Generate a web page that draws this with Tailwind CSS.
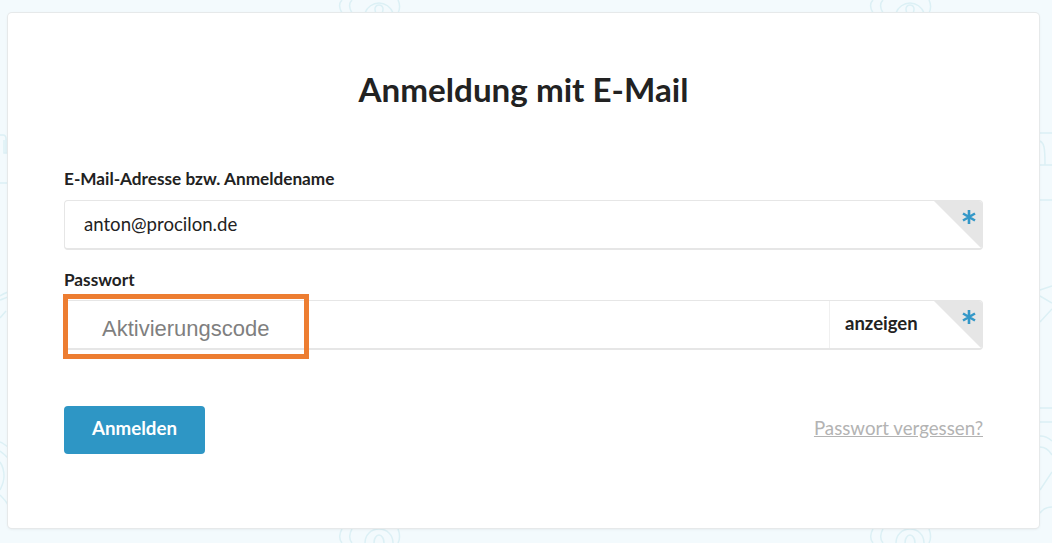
<!DOCTYPE html>
<html>
  <head>
    <meta charset="UTF-8" />
    <title>Anmeldung mit E-Mail</title>
    <script src="https://cdn.jsdelivr.net/npm/@tailwindcss/browser@4"></script>
  </head>
  <body class="bg-[#f3fafd] font-['Lato',sans-serif] text-[#222]">
    <div class="relative h-[543px] w-[1052px] overflow-hidden pl-[8px] pt-[13px]">
      <!-- Hintergrundmuster -->
      <svg class="absolute inset-0" width="1052" height="543" fill="none" stroke="#dcf0f5" stroke-width="1.5">
        <path d="M342 13c-3-5-3-10 0-13M352 13c-3-5-3-10 0-13M365 13c2-6 8-10 14-10s12 4 14 10M376 13c-2-4-1-8 3-8s5 4 3 8M398 13c2-4 2-9 0-13" />
        <path d="M873 13c-3-5-3-10 0-13M883 13c-3-5-3-10 0-13M896 13c2-6 8-10 14-10s12 4 14 10M907 13c-2-4-1-8 3-8s5 4 3 8M929 13c2-4 2-9 0-13" />
        <path d="M342 529c-3 5-3 10 0 14M352 529c-3 5-3 10 0 14M365 543c0-8 6-14 14-14s14 6 14 14M374 543c0-4 2-8 5-8s5 4 5 8M398 529c2 5 2 10 0 14" />
        <path d="M873 529c-3 5-3 10 0 14M883 529c-3 5-3 10 0 14M896 543c0-8 6-14 14-14s14 6 14 14M905 543c0-4 2-8 5-8s5 4 5 8M929 529c2 5 2 10 0 14" />
        <path d="M0 135h3c2 0 3 2 3 4v14h2M4 140v13h3M0 183h8M0 296c3-2 5-3 8-4M0 300c3-1 5-2 8-3M0 318l6-7M0 442c3 1 5 3 8 5M0 451c3 2 5 4 8 7M0 462c2 3 4 8 4 14s-2 10-4 14M0 495c3 3 6 6 8 10" />
        <path d="M1040 133h12M1040 141c4 2 5 6 5 24M1040 165h12M1040 200h12M1040 290l12-4M1040 296l12 7M1040 322l12-13M1040 408h12M1040 422h12M1040 436c4 0 9 2 12 5M1040 447c5 0 9 3 12 8M1040 490l12-18M1040 513c3-4 7-6 12-6" />
      </svg>

      <main class="relative h-[515px] w-[1031px] rounded-[4px] bg-white px-[56px] pt-[57px] shadow-[0_0_0_1px_#e6e9ea,0_1px_3px_rgba(0,0,0,0.1)]">
        <h1 class="text-center text-[33.2px] leading-[38px] font-bold">Anmeldung mit E-Mail</h1>

        <form class="mt-[61px]">
          <label class="block text-[17.2px] leading-[20px] font-bold">E-Mail-Adresse bzw. Anmeldename</label>
          <div class="relative mt-[11px] flex h-[50px] items-center overflow-hidden rounded-[4px] border border-b-2 border-[#e6e6e6] bg-white pl-[19px] text-[18.6px]">
            <span>anton@procilon.de</span>
            <span class="absolute top-[-1px] right-[-1px] h-[50px] w-[50px] bg-[#e6e6e6] [clip-path:polygon(0_0,100%_0,100%_100%)]"></span>
            <svg class="absolute top-[9px] right-[6px]" width="14" height="14" viewBox="0 0 14 14" fill="none" stroke="#3498c8" stroke-width="2.6">
              <path d="M7 0v14M1 3.5l12 7M13 3.5l-12 7" />
            </svg>
          </div>

          <label class="mt-[20px] block text-[17.2px] leading-[20px] font-bold">Passwort</label>
          <div class="relative mt-[10px] flex h-[50px] items-center overflow-hidden rounded-[4px] border border-b-2 border-[#e6e6e6] bg-white">
            <span class="absolute top-[-1px] right-[-1px] h-[50px] w-[50px] bg-[#e6e6e6] [clip-path:polygon(0_0,100%_0,100%_100%)]"></span>
            <svg class="absolute top-[9px] right-[6px]" width="14" height="14" viewBox="0 0 14 14" fill="none" stroke="#3498c8" stroke-width="2.6">
              <path d="M7 0v14M1 3.5l12 7M13 3.5l-12 7" />
            </svg>
            <span class="relative ml-auto flex h-full w-[153px] items-center border-l border-[#f0f0f0] pb-[1px] pl-[15px] text-[18.5px] font-bold">anzeigen</span>
          </div>

          <div class="mt-[56px] flex items-center justify-between">
            <button type="button" class="h-[48px] w-[141px] rounded-[4px] bg-[#2e96c5] pb-[3px] text-[18.7px] font-bold text-white">Anmelden</button>
            <a href="#" class="mb-[3px] text-[18.7px] text-[#b3b3b3] underline">Passwort vergessen?</a>
          </div>
        </form>
      </main>

      <!-- Markierung aus der Anleitung -->
      <div class="absolute top-[294px] left-[63px] flex h-[65px] w-[246px] items-center border-[5px] border-[#ed7d31] pt-[3px] pl-[34px] font-['Liberation_Sans',sans-serif] text-[22px] text-[#7f7f7f]">Aktivierungscode</div>
    </div>
  </body>
</html>
